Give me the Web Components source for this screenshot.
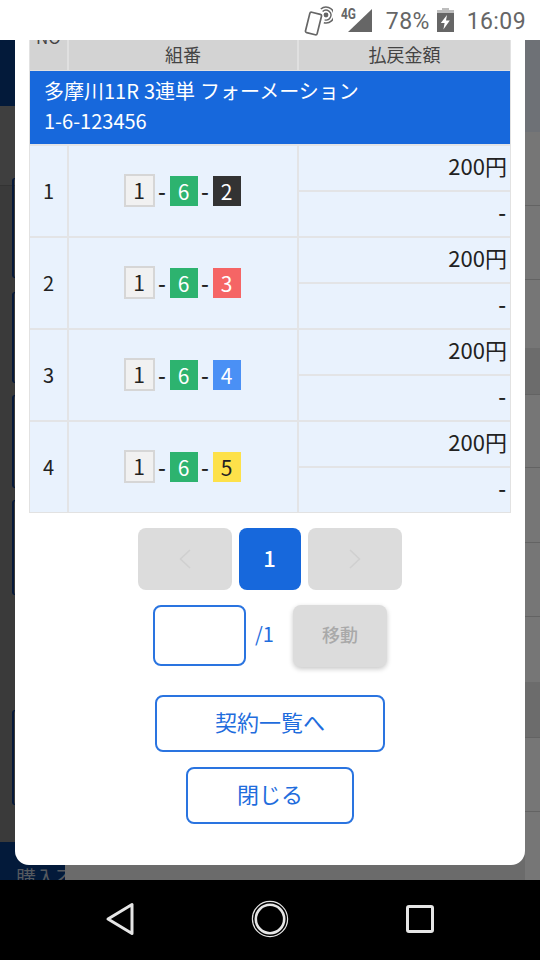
<!DOCTYPE html>
<html lang="ja">
<head>
<meta charset="utf-8">
<title>契約内容</title>
<style>
  html, body { margin: 0; padding: 0; background: #000; }
  body {
    width: 540px;
    height: 960px;
    overflow: hidden;
    font-family: "Noto Sans CJK JP", "Noto Sans", sans-serif;
  }
</style>
</head>
<body>
<phone-screen>
  <status-bar slot="status"></status-bar>
  <behind-page slot="page"></behind-page>
  <contract-modal slot="modal">
    <bet-table title-line="多摩川11R 3連単 フォーメーション" sub-line="1-6-123456">
      <bet-row no="1" last="2" color="#333333" amount="200円"></bet-row>
      <bet-row no="2" last="3" color="#f56565" amount="200円"></bet-row>
      <bet-row no="3" last="4" color="#4a90f5" amount="200円"></bet-row>
      <bet-row no="4" last="5" color="#fde14a" ink="#222" amount="200円"></bet-row>
    </bet-table>
    <page-nav></page-nav>
    <page-jump></page-jump>
    <outline-button width="230" top="28">契約一覧へ</outline-button>
    <outline-button width="168" top="15">閉じる</outline-button>
  </contract-modal>
  <nav-bar slot="nav"></nav-bar>
</phone-screen>

<script>
class PhoneScreen extends HTMLElement {
  constructor() {
    super();
    this.attachShadow({ mode: "open" });
  }

  connectedCallback() {
    this.shadowRoot.innerHTML = `
      <style>
        :host { display: flex; flex-direction: column; width: 540px; height: 960px; }
        .view { position: relative; height: 840px; overflow: hidden; }
      </style>
      <slot name="status"></slot>
      <div class="view">
        <slot name="page"></slot>
        <slot name="modal"></slot>
      </div>
      <slot name="nav"></slot>
    `;
  }
}

class StatusBar extends HTMLElement {
  constructor() {
    super();
    this.attachShadow({ mode: "open" });
  }

  connectedCallback() {
    this.shadowRoot.innerHTML = `
      <style>
        :host {
          display: flex;
          align-items: center;
          justify-content: flex-end;
          height: 40px;
          padding-right: 14px;
          box-sizing: border-box;
          background: #fff;
          color: #666;
          font-family: Roboto, sans-serif;
        }
        svg { display: block; }
        .nfc { margin-right: 8px; }
        .signal { margin-right: 14px; }
        .pct { font-size: 23px; letter-spacing: 0.4px; margin-right: 7px; padding-top: 2px; }
        .batt { margin-right: 13px; }
        .time { font-size: 23px; letter-spacing: 0.4px; padding-top: 2px; }
        .sig-label { font: 700 14px "Roboto", sans-serif; fill: #666; }
      </style>
      <svg class="nfc" width="32" height="32" viewBox="0 0 32 32" fill="none" stroke="#666">
        <rect x="6.5" y="9" width="12" height="21" rx="1.6" stroke-width="1.7" transform="rotate(14 12.5 19.5)"/>
        <circle cx="25" cy="11" r="2.4" fill="#666" stroke="none"/>
        <path d="M19.8 5a8 8 0 1 1 3 13.7" stroke-width="1.5"/>
        <path d="M21.6 7.6a4.9 4.9 0 1 1 2 8.2" stroke-width="1.4"/>
      </svg>
      <svg class="signal" width="31" height="32" viewBox="0 0 31 32">
        <text class="sig-label" x="0" y="15" textLength="15" lengthAdjust="spacingAndGlyphs">4G</text>
        <path d="M7 28H31V5Z" fill="#666"/>
      </svg>
      <span class="pct">78%</span>
      <svg class="batt" width="17" height="24" viewBox="0 0 17 24">
        <path d="M5 0H12V2H17V24H0V2H5Z" fill="#bdbdbd"/>
        <path d="M0 5H17V24H0Z" fill="#666"/>
        <path d="M10 7L3.8 15H7.6L6.4 21.4L12.8 12.6H9Z" fill="#fff"/>
      </svg>
      <span class="time">16:09</span>
    `;
  }
}

// the dimmed page under the dialog, only its two edges are visible
class BehindPage extends HTMLElement {
  constructor() {
    super();
    this.attachShadow({ mode: "open" });
  }

  get rows() {
    return [
      [66, "navy"], [72, ""], [100, "box"], [14, ""], [91, "box"], [12, ""],
      [93, "box"], [12, ""], [95, "box"], [115, ""], [95, "box"], [37, ""]
    ];
  }

  get rightRows() {
    return [
      [92, "tint"], [74, "line"], [74, "line"], [68, ""], [47, "dark line"], [73, "line"],
      [75, "line"], [74, "line"], [65, ""], [56, "dark line"], [74, "line"], [28, ""]
    ];
  }

  connectedCallback() {
    const left = this.rows.map(([h, c]) => `<div class="${c}" style="height:${h}px"></div>`).join("");
    const right = this.rightRows.map(([h, c]) => `<div class="${c}" style="height:${h}px"></div>`).join("");
    this.shadowRoot.innerHTML = `
      <style>
        :host {
          display: grid;
          grid-template-columns: 15px 1fr 15px;
          height: 840px;
          background: #6b6b6b;
        }
        .left {
          display: flex;
          flex-direction: column;
          background: linear-gradient(#3f3f3f 0 145px, #333 145px 146px, #3a3a3a 146px);
        }
        .right { display: flex; flex-direction: column; background: #767676; }
        .mid { background: #6b6b6b; }
        .navy { background: #031a3a; }
        .box {
          margin-left: 12px;
          border: solid #06193a;
          border-width: 1px 0 1px 2px;
          border-radius: 5px 0 0 5px;
          box-sizing: border-box;
        }
        .tint { background: #6e7176; }
        .dark { background: #6c6c6c; }
        .line { border-bottom: 1px solid #636363; box-sizing: border-box; }
        .foot {
          position: absolute;
          left: 0;
          bottom: 0;
          width: 65px;
          height: 38px;
          overflow: hidden;
          background: #031a3a;
          color: #55595f;
          font-size: 20px;
          line-height: 28px;
          white-space: nowrap;
        }
        .foot span { display: block; padding: 22px 0 0 16px; }
      </style>
      <div class="left">${left}</div>
      <div class="mid"></div>
      <div class="right">${right}</div>
      <div class="foot"><span>購入不</span></div>
    `;
  }
}

class ContractModal extends HTMLElement {
  constructor() {
    super();
    this.attachShadow({ mode: "open" });
  }

  connectedCallback() {
    this.shadowRoot.innerHTML = `
      <style>
        :host {
          position: absolute;
          left: 15px;
          top: 0;
          width: 510px;
          height: 825px;
          box-sizing: border-box;
          padding: 0 14px;
          display: flex;
          flex-direction: column;
          align-items: center;
          overflow: hidden;
          background: #fff;
          border-radius: 0 0 14px 14px;
        }
      </style>
      <slot></slot>
    `;
  }
}

class BetTable extends HTMLElement {
  constructor() {
    super();
    this.attachShadow({ mode: "open" });
  }

  connectedCallback() {
    this.shadowRoot.innerHTML = `
      <style>
        :host {
          display: block;
          width: 482px;
          flex: none;
          border: solid #e2e2e2;
          border-width: 0 1px 1px 1px;
          box-sizing: border-box;
          color: #222;
        }
        .head {
          display: grid;
          grid-template-columns: 37px 230px 1fr;
          height: 31px;
          background: #d3d3d3;
          color: #444;
          font-size: 18px;
          overflow: hidden;
          border-bottom: 1px solid #e0e0e0;
          box-sizing: border-box;
        }
        .head div {
          text-align: center;
          line-height: 29px;
          height: 30px;
          box-sizing: border-box;
          border-left: 2px solid #e0e0e0;
        }
        .head .no {
          border-left: 0;
          font-size: 17px;
          line-height: 20px;
          margin-top: -13px;
          height: 43px;
        }
        .title {
          height: 73px;
          box-sizing: border-box;
          padding: 5px 14px 0;
          background: #1768dc;
          color: #fff;
          font-size: 20px;
          line-height: 30px;
          word-spacing: 0.5px;
        }
      </style>
      <div class="head">
        <div class="no">NO</div>
        <div>組番</div>
        <div>払戻金額</div>
      </div>
      <div class="title">${this.getAttribute("title-line")}<br>${this.getAttribute("sub-line")}</div>
      <slot></slot>
    `;
  }
}

class BetRow extends HTMLElement {
  constructor() {
    super();
    this.attachShadow({ mode: "open" });
  }

  connectedCallback() {
    const color = this.getAttribute("color");
    const ink = this.getAttribute("ink") || "#fff";
    this.shadowRoot.innerHTML = `
      <style>
        :host {
          display: grid;
          grid-template-columns: 37px 230px 1fr;
          height: 92px;
          box-sizing: border-box;
          background: #e9f2fd;
          border-top: 2px solid #e3e4e6;
        }
        .no, .combo {
          display: flex;
          align-items: center;
          font-size: 20px;
        }
        .no { justify-content: center; padding-bottom: 2px; }
        .combo {
          justify-content: center;
          border-left: 2px solid #e3e4e6;
          box-sizing: border-box;
          padding-right: 2px;
        }
        .dash { width: 15px; text-align: center; font-size: 22px; font-weight: 500; line-height: 30px; padding-bottom: 2px; }
        .box {
          display: flex;
          align-items: center;
          justify-content: center;
          width: 28px;
          height: 30px;
          font-size: 21px;
          line-height: 30px;
        }
        .one {
          width: 31px;
          height: 33px;
          box-sizing: border-box;
          margin-bottom: 2px;
          background: #f1f1f1;
          border: 2px solid #d6d6d6;
          color: #222;
        }
        .six { background: #2db36f; color: #fff; }
        .amounts {
          display: grid;
          grid-template-rows: 44px 46px;
          border-left: 2px solid #e3e4e6;
          box-sizing: border-box;
          font-size: 22px;
        }
        .amounts div {
          text-align: right;
          padding-right: 3px;
          line-height: 38px;
        }
        .amounts div + div {
          border-top: 2px solid #e3e4e6;
          padding-right: 4px;
          font-weight: 500;
        }
      </style>
      <div class="no">${this.getAttribute("no")}</div>
      <div class="combo">
        <span class="box one">1</span>
        <span class="dash">-</span>
        <span class="box six">6</span>
        <span class="dash">-</span>
        <span class="box" style="background:${color};color:${ink}">${this.getAttribute("last")}</span>
      </div>
      <div class="amounts">
        <div>${this.getAttribute("amount")}</div>
        <div>-</div>
      </div>
    `;
  }
}

class PageNav extends HTMLElement {
  constructor() {
    super();
    this.attachShadow({ mode: "open" });
  }

  connectedCallback() {
    this.shadowRoot.innerHTML = `
      <style>
        :host {
          display: flex;
          gap: 7px;
          margin-top: 15px;
          margin-left: -1px;
          flex: none;
        }
        div {
          display: flex;
          align-items: center;
          justify-content: center;
          width: 94px;
          height: 62px;
          border-radius: 8px;
          background: #dcdcdc;
        }
        .cur {
          width: 62px;
          box-sizing: border-box;
          padding-bottom: 5px;
          background: #1768dc;
          color: #fff;
          font-size: 22px;
          font-weight: 500;
        }
        svg { display: block; }
      </style>
      <div><svg width="12" height="20" viewBox="0 0 12 20" fill="none" stroke="#d0d0d0" stroke-width="1.6"><path d="M11 1L1.5 10L11 19"/></svg></div>
      <div class="cur">1</div>
      <div><svg width="12" height="20" viewBox="0 0 12 20" fill="none" stroke="#d0d0d0" stroke-width="1.6"><path d="M1 1L10.5 10L1 19"/></svg></div>
    `;
  }
}

class PageJump extends HTMLElement {
  constructor() {
    super();
    this.attachShadow({ mode: "open" });
  }

  connectedCallback() {
    this.shadowRoot.innerHTML = `
      <style>
        :host {
          display: flex;
          align-items: flex-start;
          margin-top: 15px;
          flex: none;
        }
        .input {
          width: 93px;
          height: 61px;
          box-sizing: border-box;
          border: 2px solid #2a74e0;
          border-radius: 8px;
          background: #fff;
        }
        .total {
          width: 47px;
          box-sizing: border-box;
          padding-left: 9px;
          color: #1f6ddd;
          font-size: 20px;
          line-height: 58px;
        }
        .go {
          display: flex;
          align-items: center;
          justify-content: center;
          width: 94px;
          height: 62px;
          box-sizing: border-box;
          padding-bottom: 4px;
          border-radius: 8px;
          background: #dcdcdc;
          color: #a9a9a9;
          font-size: 18px;
          font-weight: 500;
          box-shadow: 0 2px 5px rgba(0,0,0,0.22);
        }
      </style>
      <div class="input"></div>
      <span class="total">/1</span>
      <div class="go">移動</div>
    `;
  }
}

class OutlineButton extends HTMLElement {
  constructor() {
    super();
    this.attachShadow({ mode: "open" });
  }

  connectedCallback() {
    this.shadowRoot.innerHTML = `
      <style>
        :host {
          display: flex;
          align-items: center;
          justify-content: center;
          flex: none;
          width: ${this.getAttribute("width")}px;
          height: 57px;
          margin-top: ${this.getAttribute("top")}px;
          box-sizing: border-box;
          padding-bottom: 5px;
          border: 2px solid #2a74e0;
          border-radius: 8px;
          color: #1f6ddd;
          background: #fff;
          font-size: 22px;
        }
      </style>
      <slot></slot>
    `;
  }
}

class NavBar extends HTMLElement {
  constructor() {
    super();
    this.attachShadow({ mode: "open" });
  }

  connectedCallback() {
    this.shadowRoot.innerHTML = `
      <style>
        :host {
          display: grid;
          grid-template-columns: 1fr 1fr 1fr;
          align-items: center;
          justify-items: center;
          height: 80px;
          box-sizing: border-box;
          padding: 0 45px 2px;
          background: #000;
        }
        svg { display: block; }
      </style>
      <svg width="30" height="34" viewBox="0 0 30 34" fill="none" stroke="#e6e6e6" stroke-width="3" stroke-linejoin="round"><path d="M27 2.5V31.5L3 17Z"/></svg>
      <svg width="38" height="38" viewBox="0 0 38 38" fill="none" stroke="#e6e6e6"><circle cx="19" cy="19" r="17.6" stroke-width="1.2"/><circle cx="19" cy="19" r="14.2" stroke-width="2.6"/></svg>
      <svg width="28" height="28" viewBox="0 0 28 28" fill="none" stroke="#e6e6e6" stroke-width="3"><rect x="1.5" y="1.5" width="25" height="25" rx="1.5"/></svg>
    `;
  }
}

customElements.define("phone-screen", PhoneScreen);
customElements.define("status-bar", StatusBar);
customElements.define("behind-page", BehindPage);
customElements.define("contract-modal", ContractModal);
customElements.define("bet-table", BetTable);
customElements.define("bet-row", BetRow);
customElements.define("page-nav", PageNav);
customElements.define("page-jump", PageJump);
customElements.define("outline-button", OutlineButton);
customElements.define("nav-bar", NavBar);
</script>
</body>
</html>
